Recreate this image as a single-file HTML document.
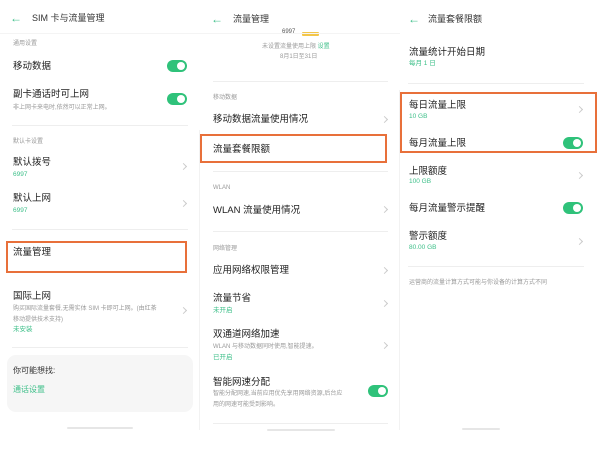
<!DOCTYPE html>
<html><head><meta charset="utf-8"><style>
*{margin:0;padding:0;box-sizing:border-box}
body{width:600px;height:450px;background:#fff;position:relative;overflow:hidden;font-family:"Liberation Sans","Noto Sans CJK SC",sans-serif;color:#222}
.t{position:absolute;white-space:nowrap;line-height:1}
.h{font-size:9px;color:#333}
.m{font-size:9.5px;color:#1e1e1e}
.s{font-size:6px;color:#999}
.g{font-size:6.5px;color:#3cbf88}
.d{font-size:6px;color:#aaa}
.ln{position:absolute;height:1px;background:#eee}
.tg{position:absolute;width:20px;height:12px;border-radius:6px;background:#2fc27a}
.tg:after{content:"";position:absolute;right:2px;top:2px;width:8px;height:8px;border-radius:50%;background:#fff}
.ch{position:absolute;width:5px;height:5px;border-right:1px solid #ccc;border-top:1px solid #ccc;transform:rotate(45deg)}
.box{position:absolute;border:2px solid #e8703a}
.ar{position:absolute;font-size:12px;color:#3cbf88;line-height:1;font-weight:bold}
.bar{position:absolute;height:2px;background:#e6e6e6;border-radius:1px}
</style></head><body>
<!-- panel 1 -->
<div class="ar" style="left:10px;top:12px">←</div>
<div class="t h" style="left:32px;top:14px">SIM 卡与流量管理</div>
<div class="ln" style="left:0;width:200px;top:33px;background:#f4f4f4"></div>
<div class="t s" style="left:13px;top:41px">通用设置</div>
<div class="t m" style="left:13px;top:62px">移动数据</div>
<div class="tg" style="left:167px;top:60px"></div>
<div class="t m" style="left:13px;top:90px">副卡通话时可上网</div>
<div class="t s" style="left:13px;top:105px">非上网卡来电时,依然可以正常上网。</div>
<div class="tg" style="left:167px;top:93px"></div>
<div class="ln" style="left:12px;width:176px;top:125px"></div>
<div class="t s" style="left:13px;top:139px">默认卡设置</div>
<div class="t m" style="left:13px;top:158px">默认拨号</div>
<div class="t g" style="left:13px;top:172px">6997</div>
<div class="ch" style="left:181px;top:164px"></div>
<div class="t m" style="left:13px;top:194px">默认上网</div>
<div class="t g" style="left:13px;top:208px">6997</div>
<div class="ch" style="left:181px;top:201px"></div>
<div class="ln" style="left:12px;width:176px;top:229px"></div>
<div class="box" style="left:6px;top:241px;width:181px;height:32px"></div>
<div class="t m" style="left:13px;top:248px">流量管理</div>
<div class="t m" style="left:13px;top:292px">国际上网</div>
<div class="t s" style="left:13px;top:306px">购买国际流量套餐,无需实体 SIM 卡即可上网。(由红茶</div>
<div class="t s" style="left:13px;top:317px">移动提供技术支持)</div>
<div class="t g" style="left:13px;top:327px">未安装</div>
<div class="ch" style="left:181px;top:308px"></div>
<div class="ln" style="left:12px;width:176px;top:347px"></div>
<div style="position:absolute;left:7px;top:355px;width:186px;height:57px;border-radius:9px;background:#f6f6f6"></div>
<div class="t" style="left:13px;top:367px;font-size:8px;color:#333">你可能想找:</div>
<div class="t" style="left:13px;top:386px;font-size:8px;color:#3cbf88">通话设置</div>
<div class="bar" style="left:67px;top:427px;width:66px"></div>
<div class="ln" style="left:199px;width:1px;top:130px;height:300px;background:#f2f2f2"></div>

<!-- panel 2 -->
<div class="ar" style="left:211px;top:13px">←</div>
<div class="t h" style="left:233px;top:15px">流量管理</div>
<div class="t" style="left:282px;top:29px;font-size:6px;color:#555">6997</div>
<div style="position:absolute;left:302px;top:32px;width:17px;height:4px;background:#f3c64a;border-radius:1px"></div>
<div class="ln" style="left:200px;width:200px;top:33px;background:#f4f4f4"></div>
<div class="t s" style="left:262px;top:44px">未设置流量使用上限 <span style="color:#3cbf88">设置</span></div>
<div class="t s" style="left:280px;top:54px">8月1日至31日</div>
<div class="ln" style="left:213px;width:175px;top:81px"></div>
<div class="t s" style="left:213px;top:95px">移动数据</div>
<div class="t m" style="left:213px;top:115px">移动数据流量使用情况</div>
<div class="ch" style="left:382px;top:117px"></div>
<div class="box" style="left:200px;top:134px;width:187px;height:29px"></div>
<div class="t m" style="left:213px;top:145px">流量套餐限额</div>
<div class="ln" style="left:213px;width:175px;top:171px"></div>
<div class="t s" style="left:213px;top:185px">WLAN</div>
<div class="t m" style="left:213px;top:206px">WLAN 流量使用情况</div>
<div class="ch" style="left:382px;top:207px"></div>
<div class="ln" style="left:213px;width:175px;top:231px"></div>
<div class="t s" style="left:213px;top:246px">网络管理</div>
<div class="t m" style="left:213px;top:266px">应用网络权限管理</div>
<div class="ch" style="left:382px;top:268px"></div>
<div class="t m" style="left:213px;top:294px">流量节省</div>
<div class="t g" style="left:213px;top:308px">未开启</div>
<div class="ch" style="left:382px;top:301px"></div>
<div class="t m" style="left:213px;top:330px">双通道网络加速</div>
<div class="t s" style="left:213px;top:344px">WLAN 与移动数据同时使用,智能提速。</div>
<div class="t g" style="left:213px;top:355px">已开启</div>
<div class="ch" style="left:382px;top:343px"></div>
<div class="t m" style="left:213px;top:378px">智能网速分配</div>
<div class="t s" style="left:213px;top:391px">智能分配网速,当前应用优先享用网络资源,后台应</div>
<div class="t s" style="left:213px;top:402px">用的网速可能受到影响。</div>
<div class="tg" style="left:368px;top:385px"></div>
<div class="ln" style="left:213px;width:175px;top:423px"></div>
<div class="bar" style="left:267px;top:429px;width:68px"></div>
<div class="ln" style="left:399px;width:1px;top:90px;height:340px;background:#f2f2f2"></div>

<!-- panel 3 -->
<div class="ar" style="left:408px;top:13px">←</div>
<div class="t h" style="left:428px;top:15px">流量套餐限额</div>
<div class="t m" style="left:409px;top:48px">流量统计开始日期</div>
<div class="t g" style="left:409px;top:61px">每月 1 日</div>
<div class="ln" style="left:408px;width:176px;top:83px"></div>
<div class="box" style="left:400px;top:92px;width:197px;height:61px"></div>
<div class="t m" style="left:409px;top:101px">每日流量上限</div>
<div class="t g" style="left:409px;top:114px">10 GB</div>
<div class="ch" style="left:577px;top:107px"></div>
<div class="t m" style="left:409px;top:139px">每月流量上限</div>
<div class="tg" style="left:563px;top:137px"></div>
<div class="t m" style="left:409px;top:167px">上限额度</div>
<div class="t g" style="left:409px;top:179px">100 GB</div>
<div class="ch" style="left:577px;top:173px"></div>
<div class="t m" style="left:409px;top:204px">每月流量警示提醒</div>
<div class="tg" style="left:563px;top:202px"></div>
<div class="t m" style="left:409px;top:232px">警示额度</div>
<div class="t g" style="left:409px;top:245px">80.00 GB</div>
<div class="ch" style="left:577px;top:239px"></div>
<div class="ln" style="left:408px;width:176px;top:266px"></div>
<div class="t s" style="left:409px;top:280px">运营商的流量计算方式可能与你设备的计算方式不同</div>
<div class="bar" style="left:462px;top:428px;width:38px"></div>
</body></html>
